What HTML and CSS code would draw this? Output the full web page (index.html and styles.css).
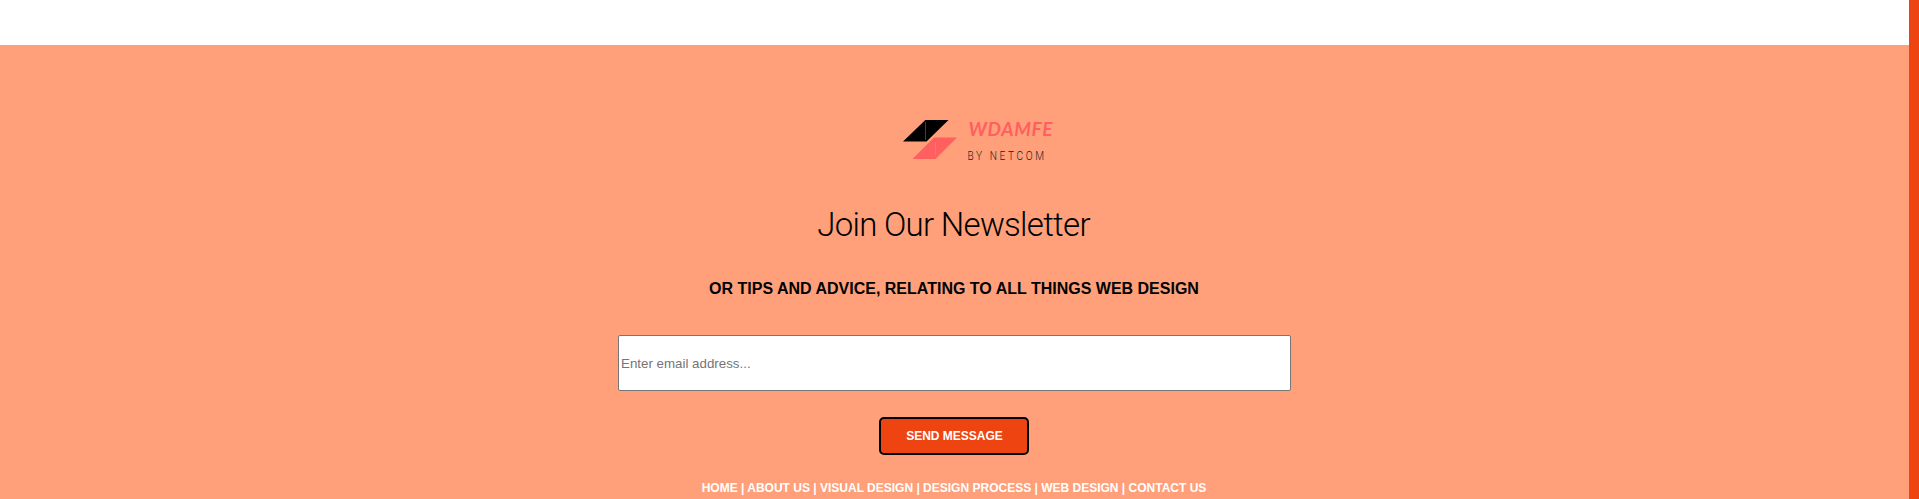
FILE: index.html
```html
<!DOCTYPE html>
<html lang="en">
<head>
<meta charset="utf-8">
<title>WDAMFE Newsletter</title>
<link rel="stylesheet" href="styles.css">
</head>
<body>
<div class="page">
  <footer class="newsletter">
    <svg class="logo" viewBox="0 0 180 70" role="img" aria-label="WDAMFE by Netcom">
      <path d="M35.3 15H58.5L36.500 36.500H13Z" fill="#000"/>
      <path d="M35.500 17V35" stroke="#6b4638" stroke-width=".8"/>
      <path d="M44 32.500H67L45.500 54H22.500Z" fill="#ff5f5f"/>
      <path d="M45.500 37V50" stroke="#ff7a6c" stroke-width=".8"/>
      <text class="logo-name" x="78.500" y="31" textLength="84">WDAMFE</text>
      <text class="logo-by" transform="translate(77.500 55) scale(.78 1)" textLength="98">BY NETCOM</text>
    </svg>
    <h1 class="title">Join Our Newsletter</h1>
    <p class="subtitle">OR TIPS AND ADVICE, RELATING TO ALL THINGS WEB DESIGN</p>
    <input class="email" type="email" placeholder="Enter email address...">
    <button class="send">SEND MESSAGE</button>
    <nav class="links">HOME | ABOUT US | VISUAL DESIGN | DESIGN PROCESS | WEB DESIGN | CONTACT US</nav>
  </footer>
  <div class="scrollbar"></div>
</div>
</body>
</html>
```
FILE: styles.css
```css
* { box-sizing: border-box; }
body {
  margin: 0;
  background: #fff;
  font-family: "Liberation Sans", Arial, sans-serif;
  overflow: hidden;
}
.page { display: flex; height: 499px; }
.newsletter {
  flex: 1;
  margin-top: 45px;
  padding-top: 60px;
  background: #ffa07a;
  display: flex;
  flex-direction: column;
  align-items: center;
}
.scrollbar { width: 10px; background: #ee4411; }
.logo { width: 180px; height: 70px; margin-left: 51px; flex: none; }
.logo-name {
  font: italic 700 19px Lato, sans-serif;
  fill: #ff5f5f;
}
.logo-by { font: 300 13px Roboto, sans-serif; fill: #222; }
.title {
  margin: 30px 2px 0 0;
  font: 300 33px/39px Roboto, sans-serif;
  letter-spacing: -0.7px;
  color: #000;
}
.subtitle {
  margin: 35px 1px 0 0;
  font-size: 16px;
  line-height: 20px;
  font-weight: 700;
  color: #000;
}
.email {
  width: 673px;
  height: 56px;
  margin: 36px 0 0;
  padding: 1px 2px;
  border: 1px solid #767676;
  border-radius: 2px;
  background: #fff;
  font: 13.333px "Liberation Sans", Arial, sans-serif;
}
.email::placeholder { color: #757575; }
.send {
  width: 150px;
  height: 38px;
  margin: 26px 1px 0 0;
  padding: 0 0 0 1px;
  border: 2px solid #000;
  border-radius: 5px;
  background: #ee4411;
  color: #fff;
  font: 700 12px "Liberation Sans", Arial, sans-serif;
}
.links {
  margin: 25px 1px 0 0;
  font-size: 12px;
  line-height: 16px;
  font-weight: 700;
  color: #fff;
  white-space: nowrap;
}
```
